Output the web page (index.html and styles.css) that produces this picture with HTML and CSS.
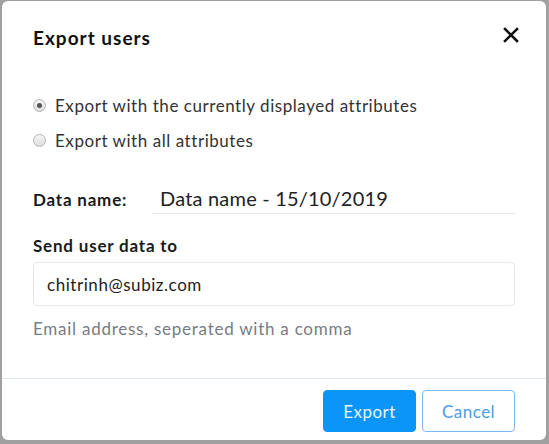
FILE: index.html
```html
<!DOCTYPE html>
<html>
<head>
<meta charset="utf-8">
<link rel="stylesheet" href="styles.css">
</head>
<body>
<div class="modal">
  <div class="header">
    <div class="title">Export users</div>
    <svg class="close" width="16" height="16" viewBox="0 0 16 16"><path d="M2 2 L14 14 M14 2 L2 14" stroke="#111" stroke-width="2.6" stroke-linecap="square"/></svg>
  </div>
  <div class="body">
    <div class="radios">
      <label class="radio"><span class="dot checked"></span>Export with the currently displayed attributes</label>
      <label class="radio"><span class="dot"></span>Export with all attributes</label>
    </div>
    <div class="name-row">
      <div class="label">Data name:</div>
      <div class="name-input">Data name - 15/10/2019</div>
    </div>
    <div class="label send">Send user data to</div>
    <div class="email-input">chitrinh@subiz.com</div>
    <div class="hint">Email address, seperated with a comma</div>
  </div>
  <div class="footer">
    <button class="btn primary">Export</button>
    <button class="btn outline">Cancel</button>
  </div>
</div>
</body>
</html>
```
FILE: styles.css
```css
html, body { margin: 0; padding: 0; }
body {
  background: #a0a0a0;
  width: 549px;
  height: 444px;
  padding: 1px 3px 4px 2px;
  box-sizing: border-box;
  font-family: Lato, "Open Sans", sans-serif;
  color: #222;
}
.modal {
  background: #fff;
  border-radius: 6px;
  height: 439px;
  display: flex;
  flex-direction: column;
}
.header {
  display: flex;
  justify-content: space-between;
  align-items: center;
  padding: 23px 27px 0 31px;
  height: 26px;
}
.title { font-size: 19px; font-weight: 700; color: #111; letter-spacing: 1px; }
.close { margin-top: -4px; }
.body { padding: 0 31px 0 31px; flex: 1; }
.radios { display: flex; flex-direction: column; gap: 13px; margin-top: 44px; }
.radio {
  display: flex; align-items: center; font-size: 17px; color: #333;
  height: 22px; letter-spacing: 0.55px;
}
.dot {
  width: 13px; height: 13px; border-radius: 50%;
  border: 1px solid #b5b5b5;
  background: linear-gradient(#f6f6f6, #dddddd);
  margin: 0 9px 0 0;
  box-sizing: border-box;
  position: relative;
  flex: none;
}
.dot.checked::after {
  content: ""; position: absolute; left: 3px; top: 3px;
  width: 5px; height: 5px; border-radius: 50%; background: #555;
}
.name-row { display: flex; align-items: flex-end; margin-top: 35px; }
.label { font-size: 17px; font-weight: 700; color: #1a1a1a; letter-spacing: 0.8px; }
.name-row .label { width: 119px; padding-bottom: 4px; }
.name-input {
  flex: 1; font-size: 20px; color: #222; letter-spacing: 0.2px;
  padding: 0 8px 3px; border-bottom: 1px solid #e4e7eb;
}
.send { margin-top: 21px; }
.email-input {
  margin-top: 6px;
  height: 44px; box-sizing: border-box;
  border: 1px solid #e3e8ef; border-radius: 4px;
  padding: 0 13px; display: flex; align-items: center;
  font-size: 17px; color: #222; letter-spacing: 0.55px;
}
.hint { margin-top: 12px; font-size: 17px; color: #777c85; letter-spacing: 0.75px; }
.footer {
  border-top: 1px solid #dfe8f1;
  display: flex; justify-content: flex-end; gap: 6px;
  padding: 11px 31px 0 0;
  height: 62px; box-sizing: border-box;
}
.btn {
  height: 42px; width: 93px; border-radius: 4px;
  font-family: inherit; font-size: 17px; letter-spacing: 0.5px;
}
.primary { background: #0b95f7; color: #e8f4ff; border: 1px solid #0b95f7; }
.outline { background: #fff; color: #4a9ee5; border: 1px solid #7ab8ee; }
```
